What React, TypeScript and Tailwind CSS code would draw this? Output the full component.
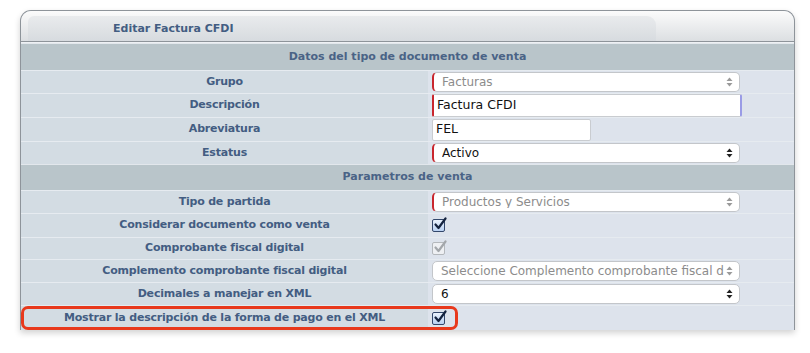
import React from 'react'

type Row =
  | { kind: 'section'; label: string; h: string }
  | { kind: 'field'; label: string; h: string; control: React.ReactNode; highlight?: boolean }

const font = "font-['DejaVu_Sans',Verdana,sans-serif]"

function Arrows({ dim }: { dim?: boolean }) {
  const c = dim ? '#9a9a9a' : '#222'
  return (
    <svg width="7" height="10" viewBox="0 0 7 10" className="shrink-0">
      <path d="M3.5 0.5 L6.5 4 L0.5 4 Z" fill={c} />
      <path d="M3.5 9.5 L6.5 6 L0.5 6 Z" fill={c} />
    </svg>
  )
}

function Select({ value, w = 'w-[308px]', required, disabled }: {
  value: string
  w?: string
  required?: boolean
  disabled?: boolean
}) {
  return (
    <div
      className={`${w} h-[20px] flex items-center justify-between gap-[2px] bg-white rounded-[5px] border border-[#c3c6ca] pl-[8px] pr-[6px] ${required ? 'border-l-2 border-l-[#c9262d]' : ''}`}
    >
      <span className={`text-[12px] leading-none whitespace-nowrap overflow-hidden ${disabled ? 'text-[#8c8c8c]' : 'text-[#111]'}`}>{value}</span>
      <Arrows dim={disabled} />
    </div>
  )
}

function TextInput({ value, w, required, focused }: { value: string; w: string; required?: boolean; focused?: boolean }) {
  return (
    <div
      className={`${w} flex items-center bg-white border border-[#c9ccd0] rounded-[2px] pl-[3px] ${required ? 'border-l-2 border-l-[#c9262d]' : ''} ${focused ? 'border-r-2 border-r-[#9a9ce6] h-[23px]' : 'h-[22px]'}`}
    >
      <span className="text-[12.5px] leading-none text-[#111]">{value}</span>
    </div>
  )
}

function Check({ disabled }: { disabled?: boolean }) {
  return (
    <div
      className={`relative w-[13px] h-[13px] rounded-[2px] border ${disabled ? 'border-[#b4b8bc] bg-[#eef0f3]' : 'border-[#33476b] bg-gradient-to-b from-[#eaf2fd] to-[#b9d1f2]'}`}
    >
      <svg width="14" height="14" viewBox="0 0 14 14" className="absolute left-[0px] top-[-3px]">
        <path
          d="M2.5 7.5 L5.5 11 L12.5 1.5"
          fill="none"
          stroke={disabled ? '#a3a7ab' : '#14233f'}
          strokeWidth="2.2"
          strokeLinecap="round"
          strokeLinejoin="round"
        />
      </svg>
    </div>
  )
}

const rows: Row[] = [
  { kind: 'section', label: 'Datos del tipo de documento de venta', h: 'h-[27px]' },
  { kind: 'field', label: 'Grupo', h: 'h-[23px]', control: <Select value="Facturas" required disabled /> },
  { kind: 'field', label: 'Descripción', h: 'h-[24px]', control: <TextInput value="Factura CFDI" w="w-[310px]" required focused /> },
  { kind: 'field', label: 'Abreviatura', h: 'h-[24px]', control: <TextInput value="FEL" w="w-[159px]" /> },
  { kind: 'field', label: 'Estatus', h: 'h-[23px]', control: <Select value="Activo" required /> },
  { kind: 'section', label: 'Parametros de venta', h: 'h-[26px]' },
  { kind: 'field', label: 'Tipo de partida', h: 'h-[23px]', control: <Select value="Productos y Servicios" required disabled /> },
  { kind: 'field', label: 'Considerar documento como venta', h: 'h-[24px]', control: <Check /> },
  { kind: 'field', label: 'Comprobante fiscal digital', h: 'h-[22px]', control: <Check disabled /> },
  { kind: 'field', label: 'Complemento comprobante fiscal digital', h: 'h-[23px]', control: <Select value="Seleccione Complemento comprobante fiscal di" disabled /> },
  { kind: 'field', label: 'Decimales a manejar en XML', h: 'h-[23px]', control: <Select value="6" /> },
  { kind: 'field', label: 'Mostrar la descripción de la forma de pago en el XML', h: 'h-[25px]', control: <Check />, highlight: true },
]

export default function App() {
  return (
    <div className={`w-[810px] h-[353px] bg-white pt-[10px] pl-[20px] ${font}`}>
      <div className="w-[775px] rounded-t-[11px] border border-[#8e949a] border-b-0 shadow-[0_3px_6px_rgba(0,0,0,0.18)] bg-[#dde3eb]">
        {/* tab header */}
        <div className="h-[31px] rounded-t-[10px] bg-gradient-to-b from-[#fbfbfb] to-[#dcdfe2] pl-[7px] pt-[5px] flex border-b border-[#8e949a]">
          <div className="w-[628px] h-[25px] rounded-tr-[9px] rounded-tl-[6px] bg-gradient-to-b from-[#e9ebed] to-[#d7dbdf] flex items-center pl-[85px]">
            <span className="text-[11px] font-bold text-[#435d82] leading-none">Editar Factura CFDI</span>
          </div>
        </div>
        <div className="h-[1px] bg-[#eef1f4]" />
        {/* form table */}
        <div className="flex flex-col">
          {rows.map((r, i) =>
            r.kind === 'section' ? (
              <div
                key={i}
                className={`${r.h} flex items-center justify-center bg-[#b9c5ca] border-t border-[#e2e7ec] text-[11px] font-bold text-[#4a6386]`}
              >
                {r.label}
              </div>
            ) : (
              <div key={i} className={`${r.h} relative flex border-t border-[#e6ebf0]`}>
                <div className="w-[407px] flex items-center justify-center bg-[#d3dce3] text-[11px] font-bold tracking-[-0.2px] text-[#435d82]">
                  {r.label}
                </div>
                <div className="flex-1 flex items-center pl-[4px] bg-[#dde3ec]">{r.control}</div>
                {r.highlight && (
                  <div className="absolute left-[0px] top-[0px] w-[437px] h-[24px] rounded-[7px] border-[3px] border-[#e8391c]" />
                )}
              </div>
            )
          )}
        </div>
      </div>
    </div>
  )
}
